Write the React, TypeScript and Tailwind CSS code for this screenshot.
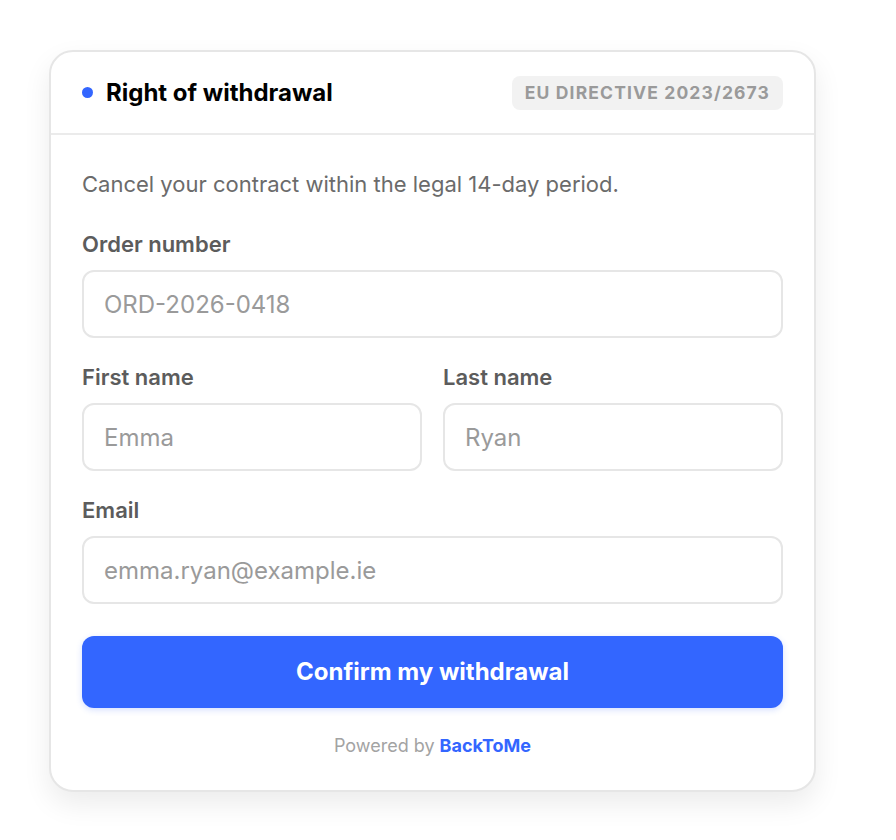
import React from "react";

function Field({ label, placeholder }: { label: string; placeholder: string }) {
  return (
    <div className="flex flex-col">
      <label className="text-[22px] leading-[28px] font-semibold text-[#5c5c5c]">{label}</label>
      <input
        placeholder={placeholder}
        className="mt-[12px] h-[68px] w-full rounded-[12px] border-2 border-[#e6e6e6] bg-white px-[20px] text-[24px] text-[#333] outline-none placeholder:text-[#9a9a9a]"
      />
    </div>
  );
}

export default function App() {
  return (
    <div
      className="min-h-[840px] w-full bg-white pt-[50px] pl-[49px]"
      style={{ fontFamily: "Inter, 'Noto Sans', sans-serif" }}
    >
      <div className="w-[767px] rounded-[24px] border-2 border-[#e6e6e6] bg-white shadow-[0_12px_28px_rgba(0,0,0,0.08)]">
        {/* header */}
        <div className="flex h-[83px] items-center justify-between border-b-2 border-[#ebebeb] px-[31px]">
          <div className="flex items-center gap-[13px]">
            <span className="h-[11px] w-[11px] rounded-full bg-[#3366ff]" />
            <h2 className="text-[24px] font-bold text-black">Right of withdrawal</h2>
          </div>
          <span className="rounded-[8px] bg-[#f2f2f2] px-[13px] py-[4px] text-[17.5px] font-bold uppercase leading-[26px] tracking-[0.065em] text-[#9a9a9a]">
            EU Directive 2023/2673
          </span>
        </div>

        {/* body */}
        <div className="px-[31px] pt-[35px] pb-[32px]">
          <p className="text-[22px] leading-[28px] text-[#6b6b6b]">
            Cancel your contract within the legal 14-day period.
          </p>

          <div className="mt-[32px] flex flex-col gap-[25px]">
            <Field label="Order number" placeholder="ORD-2026-0418" />
            <div className="grid grid-cols-2 gap-[21px]">
              <Field label="First name" placeholder="Emma" />
              <Field label="Last name" placeholder="Ryan" />
            </div>
            <Field label="Email" placeholder="emma.ryan@example.ie" />
          </div>

          <button className="mt-[32px] h-[72px] w-full rounded-[12px] bg-[#3366ff] text-[24px] font-bold text-white shadow-[0_2px_6px_rgba(51,102,255,0.2)]">
            Confirm my withdrawal
          </button>

          <p className="mt-[26px] text-center text-[18px] leading-[24px] text-[#a3a3a3]">
            Powered by <span className="font-bold text-[#3366ff]">BackToMe</span>
          </p>
        </div>
      </div>
    </div>
  );
}
